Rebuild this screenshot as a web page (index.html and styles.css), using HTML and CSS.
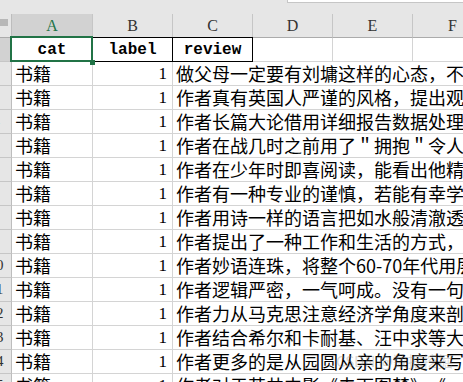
FILE: index.html
```html
<!DOCTYPE html>
<html lang="zh">
<head>
    <meta charset="UTF-8">
    <title>Sheet</title>
    <link rel="stylesheet" href="styles.css">
</head>
<body>
<div class="sheet">
    <div class="topbar"><div class="namebox"></div></div>
    <div class="row colheads">
        <div class="rh corner"><span class="tri"></span></div>
        <div class="ch sel">A</div>
        <div class="ch">B</div>
        <div class="ch">C</div>
        <div class="ch">D</div>
        <div class="ch">E</div>
        <div class="ch">F</div>
    </div>
    <div class="row">
        <div class="rh sel"><span>1</span></div>
        <div class="c head active">cat</div>
        <div class="c head boxed">label</div>
        <div class="c head boxed">review</div>
        <div class="c"></div>
        <div class="c"></div>
        <div class="c"></div>
    </div>
    <div class="row"><div class="rh"><span>2</span></div><div class="c txt">书籍</div><div class="c num">1</div><div class="c txt review">做父母一定要有刘墉这样的心态，不</div></div>
    <div class="row"><div class="rh"><span>3</span></div><div class="c txt">书籍</div><div class="c num">1</div><div class="c txt review">作者真有英国人严谨的风格，提出观</div></div>
    <div class="row"><div class="rh"><span>4</span></div><div class="c txt">书籍</div><div class="c num">1</div><div class="c txt review">作者长篇大论借用详细报告数据处理</div></div>
    <div class="row"><div class="rh"><span>5</span></div><div class="c txt">书籍</div><div class="c num">1</div><div class="c txt review">作者在战几时之前用了＂拥抱＂令人</div></div>
    <div class="row"><div class="rh"><span>6</span></div><div class="c txt">书籍</div><div class="c num">1</div><div class="c txt review">作者在少年时即喜阅读，能看出他精</div></div>
    <div class="row"><div class="rh"><span>7</span></div><div class="c txt">书籍</div><div class="c num">1</div><div class="c txt review">作者有一种专业的谨慎，若能有幸学</div></div>
    <div class="row"><div class="rh"><span>8</span></div><div class="c txt">书籍</div><div class="c num">1</div><div class="c txt review">作者用诗一样的语言把如水般清澈透</div></div>
    <div class="row"><div class="rh"><span>9</span></div><div class="c txt">书籍</div><div class="c num">1</div><div class="c txt review">作者提出了一种工作和生活的方式，</div></div>
    <div class="row"><div class="rh"><span>10</span></div><div class="c txt">书籍</div><div class="c num">1</div><div class="c txt review">作者妙语连珠，将整个60-70年代用层</div></div>
    <div class="row"><div class="rh"><span>11</span></div><div class="c txt">书籍</div><div class="c num">1</div><div class="c txt review">作者逻辑严密，一气呵成。没有一句</div></div>
    <div class="row"><div class="rh"><span>12</span></div><div class="c txt">书籍</div><div class="c num">1</div><div class="c txt review">作者力从马克思注意经济学角度来剖</div></div>
    <div class="row"><div class="rh"><span>13</span></div><div class="c txt">书籍</div><div class="c num">1</div><div class="c txt review">作者结合希尔和卡耐基、汪中求等大</div></div>
    <div class="row"><div class="rh"><span>14</span></div><div class="c txt">书籍</div><div class="c num">1</div><div class="c txt review">作者更多的是从园圆从亲的角度来写</div></div>
    <div class="row"><div class="rh"><span>15</span></div><div class="c txt">书籍</div><div class="c num">1</div><div class="c txt review">作者对于英共中影《夫下图楚》，《</div></div>
    <div class="watermark">CSDN @数据挖掘</div>
</div>
</body>
</html>
```

FILE: styles.css
```css
body {
    margin: 0;
    background: #fff;
}

.sheet {
    position: relative;
    width: 463px;
    height: 382px;
    overflow: hidden;
}

.topbar {
    display: flex;
    justify-content: flex-end;
    height: 14px;
    background: #e6e6e6;
}
.namebox {
    width: 175px;
    height: 2px;
    background: #fff;
    border-left: 1px solid #c6c6c6;
    border-bottom: 1px solid #c6c6c6;
}

.row {
    display: grid;
    grid-template-columns: 12px 81px 80px 80px 80px 80px 80px;
    height: 24px;
}
.row > div {
    box-sizing: border-box;
    height: 24px;
}

/* column letters */
.colheads {
    background: #e6e6e6;
}
.ch {
    border-right: 1px solid #c6c6c6;
    border-bottom: 1px solid #ababab;
    font-family: "Liberation Serif", serif;
    font-size: 16px;
    line-height: 24px;
    color: #333;
    text-align: center;
}
.ch.sel {
    background: #d2d2d2;
    color: #217346;
}

/* row numbers */
.rh {
    overflow: hidden;
    background: #e6e6e6;
    border-right: 1px solid #bdbdbd;
    border-bottom: 1px solid #c6c6c6;
    font-family: "Liberation Serif", serif;
    font-size: 15px;
    line-height: 23px;
    color: #333;
}
.rh span {
    display: block;
    width: 22px;
    margin-left: -15px;
    text-align: center;
}
.rh.sel {
    background: #d2d2d2;
}
.corner {
    display: flex;
    justify-content: flex-end;
    align-items: flex-end;
    padding: 0 3px 11px 0;
    border-bottom-color: #ababab;
}
.tri {
    width: 0;
    height: 0;
    border-left: 7px solid transparent;
    border-bottom: 7px solid #b8b8b8;
}

/* cells */
.c {
    position: relative;
    border-right: 1px solid #d4d4d4;
    border-bottom: 1px solid #d4d4d4;
    padding: 0 3px;
    white-space: nowrap;
    overflow: hidden;
    color: #000;
}
.head {
    overflow: visible;
    font-family: "Liberation Mono", monospace;
    font-weight: bold;
    font-size: 16px;
    line-height: 24px;
    text-align: center;
}
.active {
    z-index: 3;
}
.active::after {
    content: "";
    position: absolute;
    left: -2px;
    top: -2px;
    right: -1px;
    bottom: -1px;
    border: 2px solid #217346;
}
.active::before {
    content: "";
    position: absolute;
    right: -3px;
    bottom: -4px;
    width: 5px;
    height: 5px;
    background: #217346;
    z-index: 1;
}
.boxed {
    z-index: 2;
}
.boxed::after {
    content: "";
    position: absolute;
    left: -1px;
    top: -1px;
    right: -1px;
    bottom: -1px;
    border: 1px solid #000;
}

.txt {
    font-family: "Noto Sans CJK SC", sans-serif;
    font-size: 18px;
    line-height: 23px;
}
.num {
    padding-right: 5px;
    text-align: right;
    font-family: "Liberation Serif", serif;
    font-size: 17px;
    line-height: 24px;
}
.review {
    grid-column: span 4;
    border-right: none;
}

.watermark {
    position: absolute;
    left: 336px;
    top: 350px;
    font-family: "Noto Sans CJK SC", sans-serif;
    font-size: 15px;
    color: rgba(140, 140, 140, 0.35);
}
```
